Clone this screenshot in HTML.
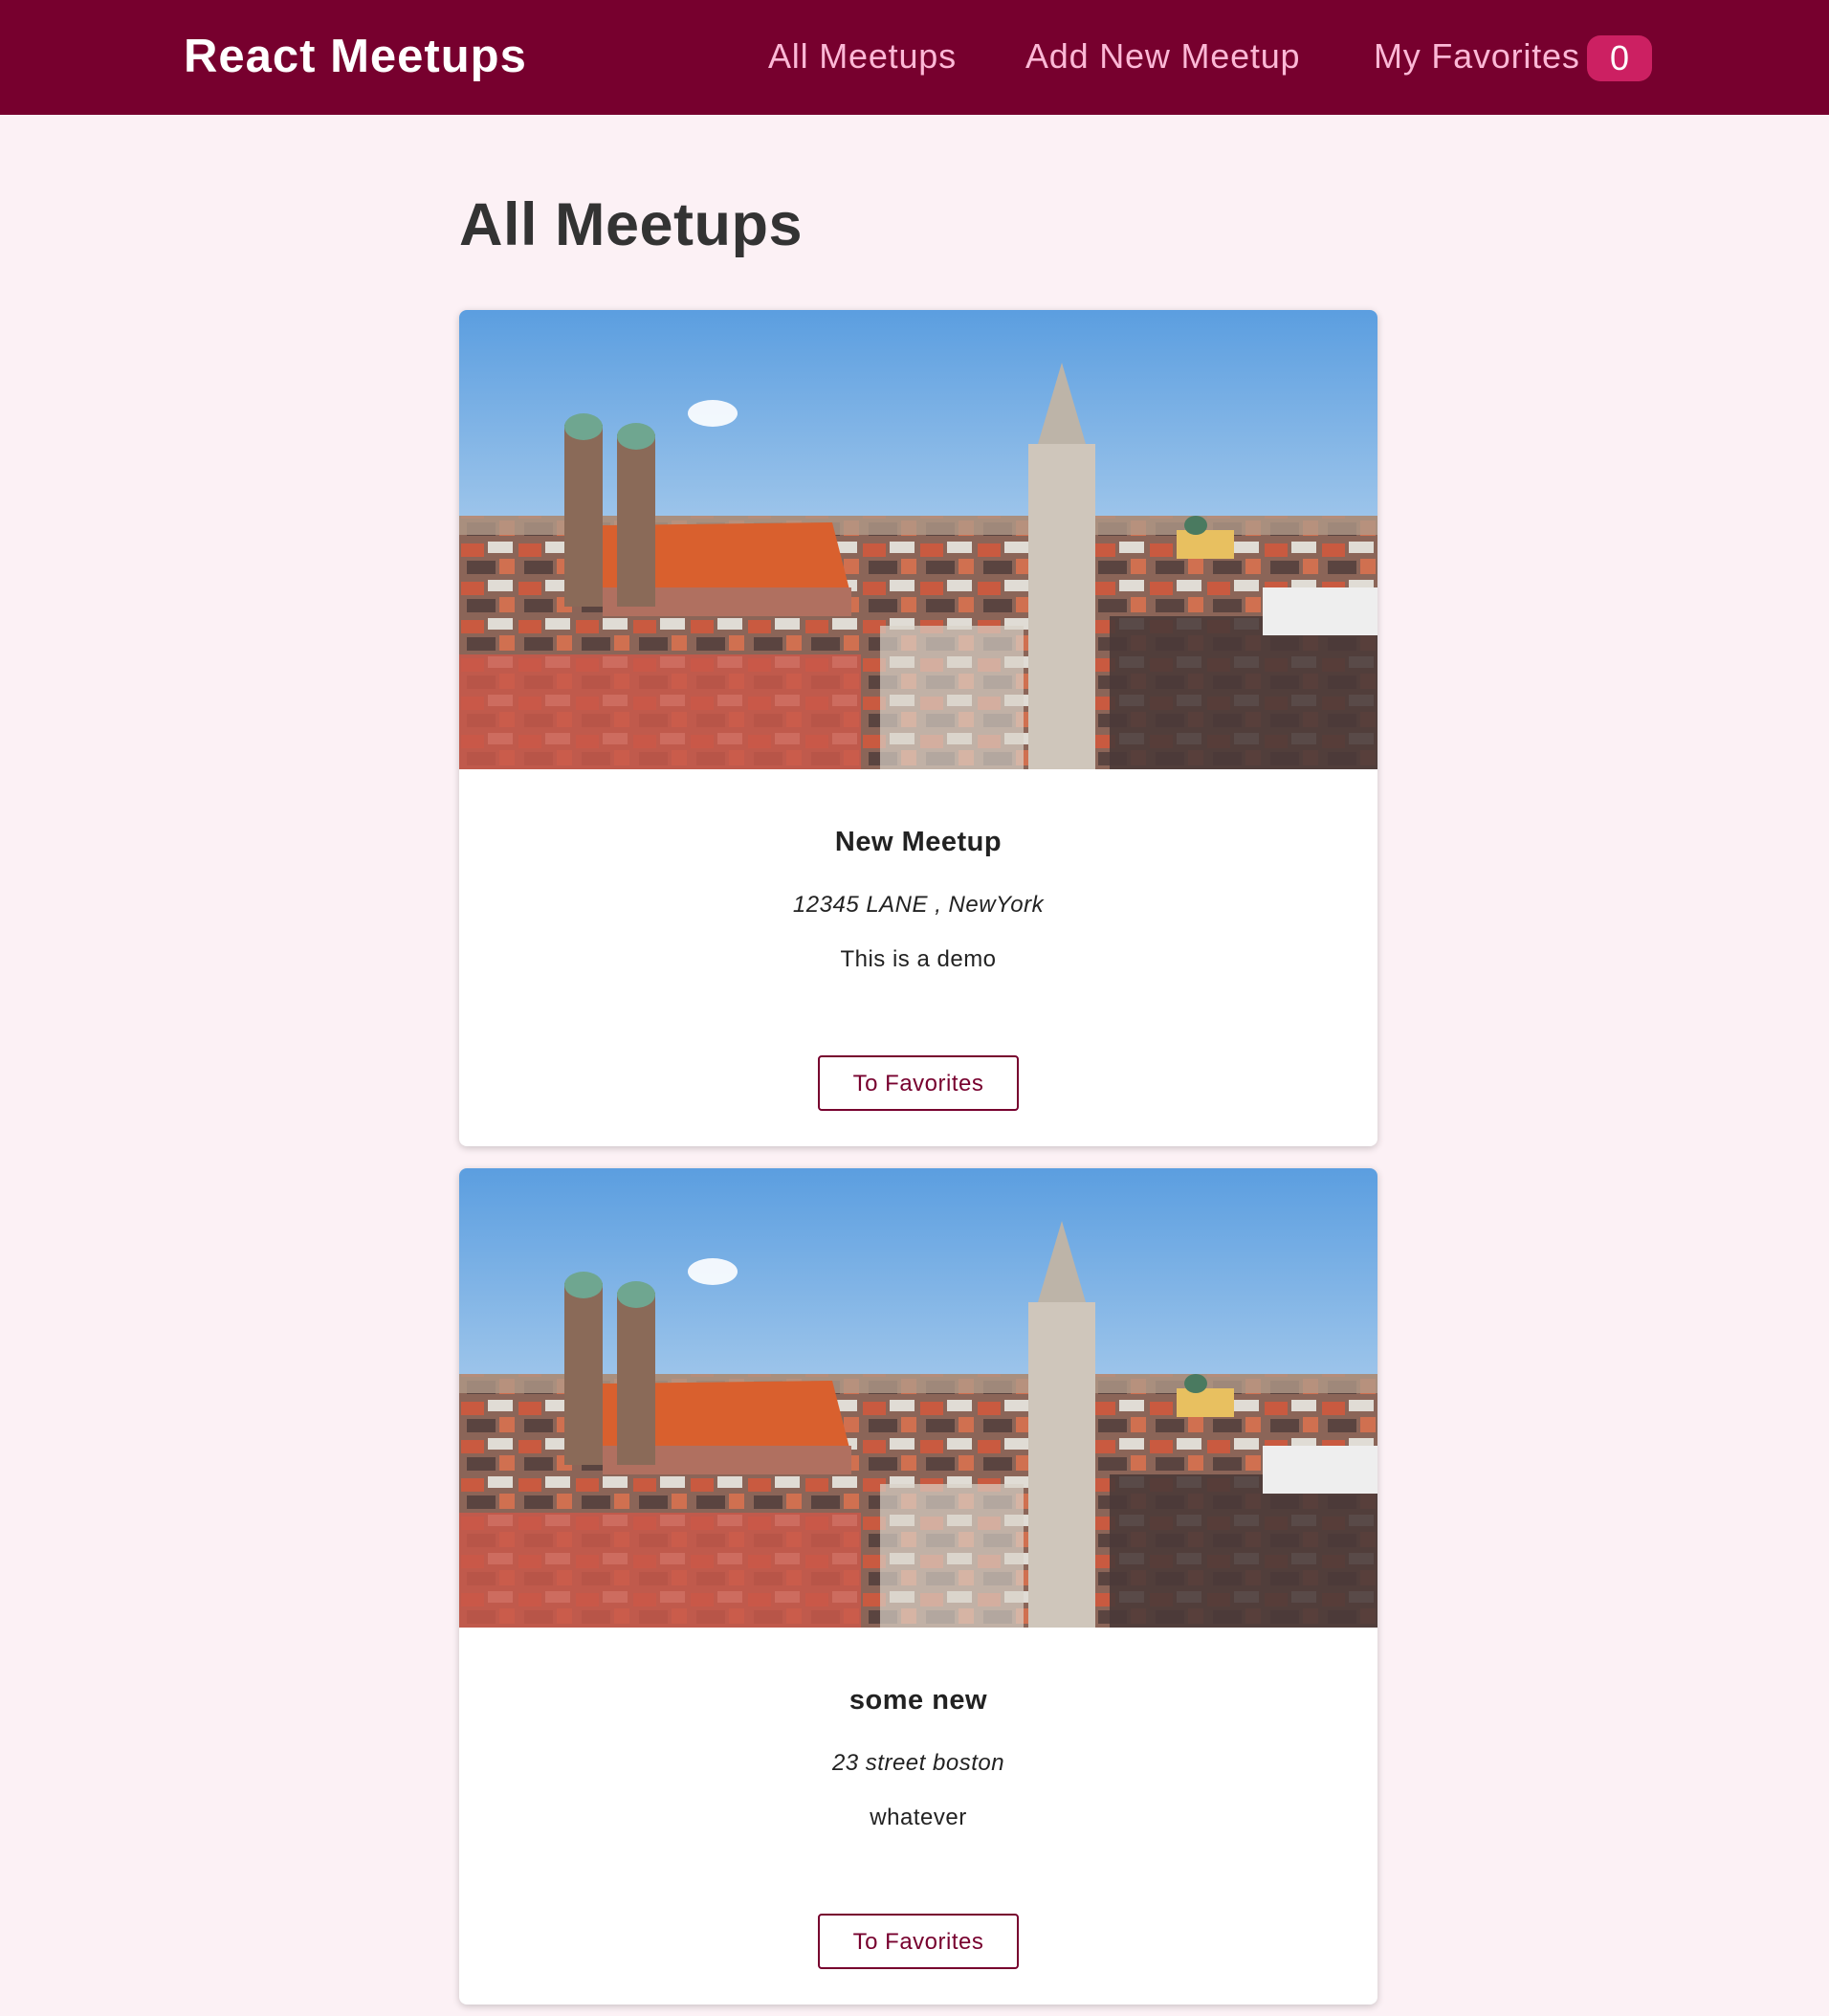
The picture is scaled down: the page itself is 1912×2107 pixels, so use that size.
<!DOCTYPE html>
<html><head><meta charset="utf-8"><style>
*{box-sizing:border-box;margin:0;padding:0}
body{width:1912px;height:2107px;background:#fcf1f5;font-family:"Liberation Sans",sans-serif;overflow:hidden;position:relative}
header{position:absolute;left:0;top:0;width:1912px;height:120px;background:#77002e}
.logo{position:absolute;left:192px;top:31px;font-size:49px;font-weight:bold;color:#fff;letter-spacing:1px}
.nav{position:absolute;top:38px;font-size:36px;color:#fcb8d6;letter-spacing:0.8px}
.badge{position:absolute;left:1659px;top:37px;width:68px;height:48px;background:#cc2062;border-radius:14px;color:#fff;font-size:36px;text-align:center;line-height:48px}
h1{position:absolute;left:480px;top:199px;font-size:63px;font-weight:bold;color:#333;letter-spacing:0.5px}
.card{position:absolute;left:480px;width:960px;height:874px;background:#fff;border-radius:8px;box-shadow:0 2px 8px rgba(0,0,0,0.2);overflow:hidden}
.img{width:960px;height:480px;display:block}
.t{position:absolute;width:100%;text-align:center;color:#222;letter-spacing:0.5px}
.btn{position:absolute;left:375px;top:779px;width:210px;height:58px;border:2px solid #77002e;border-radius:4px;color:#77002e;font-size:24px;text-align:center;line-height:56px;background:#fff;letter-spacing:0.5px}
</style></head><body>
<svg width="0" height="0" style="position:absolute"><defs>
<linearGradient id="s" x1="0" y1="0" x2="0" y2="1"><stop offset="0" stop-color="#5b9ee0"/><stop offset="0.45" stop-color="#9cc4ea"/><stop offset="1" stop-color="#c9dcec"/></linearGradient>
<pattern id="roofs" width="60" height="40" patternUnits="userSpaceOnUse"><rect width="60" height="40" fill="#8b6558"/><rect x="2" y="4" width="24" height="14" fill="#c95a40"/><rect x="30" y="2" width="26" height="12" fill="#e0dcd5"/><rect x="8" y="22" width="30" height="14" fill="#5a4440"/><rect x="42" y="20" width="16" height="16" fill="#d07050"/></pattern>
<g id="city">
<rect width="960" height="480" fill="url(#s)"/>
<ellipse cx="265" cy="108" rx="26" ry="14" fill="#fff" opacity="0.9"/>
<rect y="215" width="960" height="265" fill="url(#roofs)"/>
<rect y="215" width="960" height="20" fill="#b09a88" opacity="0.8"/>
<polygon points="150,225 390,222 410,300 150,310" fill="#d9602e"/>
<rect x="150" y="290" width="260" height="30" fill="#b07060"/>
<rect x="110" y="120" width="40" height="190" fill="#8a6a58"/><ellipse cx="130" cy="122" rx="20" ry="14" fill="#6fa690"/>
<rect x="165" y="130" width="40" height="180" fill="#8a6a58"/><ellipse cx="185" cy="132" rx="20" ry="14" fill="#6fa690"/>
<rect x="595" y="140" width="70" height="340" fill="#cfc6bb"/><polygon points="605,140 630,55 655,140" fill="#bdb4a8"/>
<rect x="0" y="360" width="420" height="120" fill="#c9584a" opacity="0.85"/>
<rect x="440" y="330" width="150" height="150" fill="#d8d2c8" opacity="0.7"/>
<rect x="680" y="320" width="280" height="160" fill="#4a3a38" opacity="0.9"/>
<rect x="840" y="290" width="120" height="50" fill="#eee"/>
<rect x="750" y="230" width="60" height="30" fill="#e8c060"/><ellipse cx="770" cy="225" rx="12" ry="10" fill="#4a7a60"/>
</g></defs></svg>
<header>
<div class="logo">React Meetups</div>
<div class="nav" style="left:803px">All Meetups</div>
<div class="nav" style="left:1072px">Add New Meetup</div>
<div class="nav" style="left:1436px">My Favorites</div>
<div class="badge">0</div>
</header>
<h1>All Meetups</h1>

<div class="card" style="top:324px">
<svg class="img" viewBox="0 0 960 480"><use href="#city"/></svg>
<div class="t" style="top:540px;font-size:29px;font-weight:bold">New Meetup</div>
<div class="t" style="top:608px;font-size:24px;font-style:italic">12345 LANE , NewYork</div>
<div class="t" style="top:665px;font-size:24px">This is a demo</div>
<div class="btn">To Favorites</div>
</div>

<div class="card" style="top:1221px">
<svg class="img" viewBox="0 0 960 480"><use href="#city"/></svg>
<div class="t" style="top:540px;font-size:29px;font-weight:bold">some new</div>
<div class="t" style="top:608px;font-size:24px;font-style:italic">23 street boston</div>
<div class="t" style="top:665px;font-size:24px">whatever</div>
<div class="btn">To Favorites</div>
</div>
</body></html>
